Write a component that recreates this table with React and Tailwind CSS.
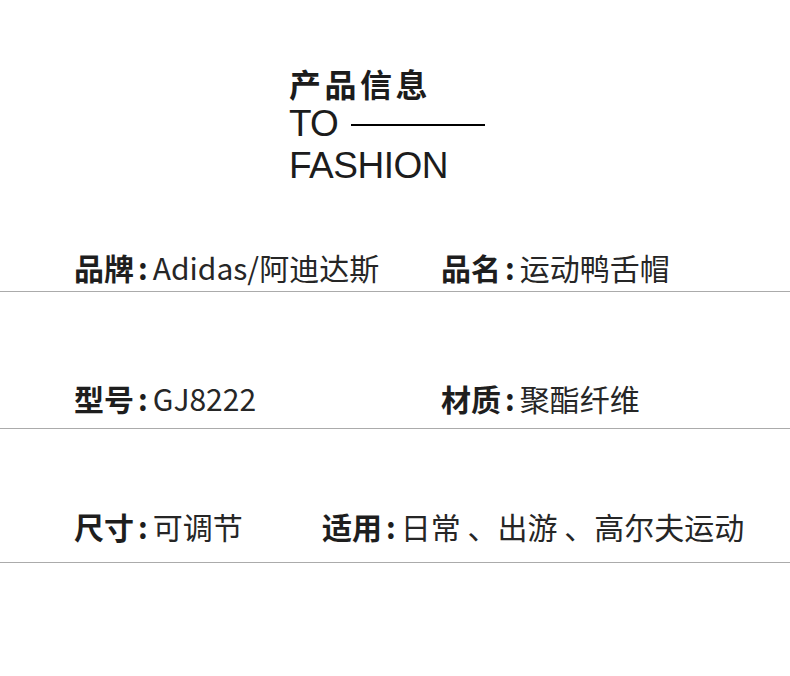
export default function App() {
  const cjk = { fontFamily: '"Noto Sans CJK SC", "Noto Sans", sans-serif' };
  const lat = { fontFamily: '"Liberation Sans", Arial, sans-serif' };
  const Item = ({ label, value, w }) => (
    <div className={w}>
      <b className="font-bold text-[#1e1e1e]">{label}</b>
      <b className="font-bold text-[#1e1e1e] ml-[4px]">:</b>
      <span className="ml-[5px] text-[#262626]">{value}</span>
    </div>
  );
  return (
    <div className="w-[790px] h-[676px] bg-white overflow-hidden text-[#222]">
      <div className="pl-[289px] pt-[67px]">
        <div className="text-[32px] leading-[32px] font-bold tracking-[3.5px] text-[#1c1c1c]" style={cjk}>
          产品信息
        </div>
        <div className="mt-[6px] flex items-center" style={lat}>
          <span className="text-[37px] leading-[37px] tracking-[-1px] text-[#1c1c1c]">TO</span>
          <span className="ml-[13px] mt-[3px] block w-[134px] h-[2px] bg-black"></span>
        </div>
        <div className="mt-[5px] text-[37px] leading-[37px] tracking-[-0.5px] text-[#1c1c1c]" style={lat}>
          FASHION
        </div>
      </div>

      <div style={cjk}>
        <div className="mt-[68px] pl-[74px] flex text-[30px] leading-[30px]">
          <Item w="w-[367px]" label="品牌" value="Adidas/阿迪达斯" />
          <Item label="品名" value="运动鸭舌帽" />
        </div>
        <div className="mt-[9px] h-px bg-[#ababab]"></div>

        <div className="mt-[91px] pl-[74px] flex text-[30px] leading-[30px]">
          <Item w="w-[367px]" label="型号" value="GJ8222" />
          <Item label="材质" value="聚酯纤维" />
        </div>
        <div className="mt-[15px] h-px bg-[#ababab]"></div>

        <div className="mt-[82px] pl-[74px] flex text-[30px] leading-[30px]">
          <Item w="w-[248px]" label="尺寸" value="可调节" />
          <Item label="适用" value="日常 、出游 、高尔夫运动" />
        </div>
        <div className="mt-[21px] h-px bg-[#ababab]"></div>
      </div>
    </div>
  );
}
